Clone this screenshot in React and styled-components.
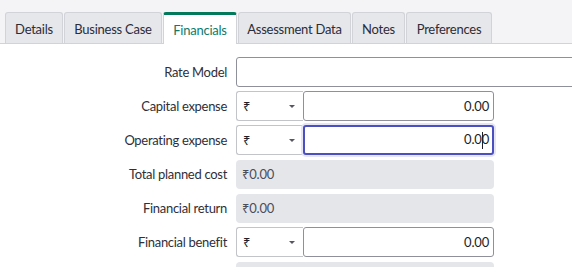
import React from "react";
import styled, { createGlobalStyle } from "styled-components";

const Global = createGlobalStyle`
  html, body { margin: 0; padding: 0; background: #ffffff; }
  body { font-family: Lato, "Noto Sans", "DejaVu Sans", sans-serif; font-size: 13px; color: #2e2f3a; }
  * { box-sizing: border-box; }
`;

const Page = styled.div`
  width: 572px;
  height: 267px;
  overflow: hidden;
  background: #ffffff;
`;

const TabBar = styled.div`
  display: flex;
  align-items: flex-end;
  gap: 1px;
  height: 44px;
  padding: 12px 0 0 5px;
  background: #f4f4f6;
  border-bottom: 1px solid #d2d3d8;
`;

const Tab = styled.div`
  width: ${(p) => p.$w}px;
  height: ${(p) => (p.$active ? "32px" : "31px")};
  margin-bottom: ${(p) => (p.$active ? "-1px" : "0")};
  display: flex;
  align-items: center;
  justify-content: center;
  font-size: 13px;
  letter-spacing: -0.25px;
  border: 1px solid #d2d3d8;
  border-bottom: none;
  border-top: ${(p) => (p.$active ? "3px solid #007a5a" : "1px solid #d2d3d8")};
  border-radius: 3px 3px 0 0;
  background: ${(p) => (p.$active ? "#ffffff" : "#e6e7eb")};
  color: ${(p) => (p.$active ? "#0f7a6a" : "#2b2c38")};
  padding-top: ${(p) => (p.$active ? "0" : "1px")};
`;

const Form = styled.div`
  display: flex;
  flex-direction: column;
  gap: 4px;
  padding-top: 13px;
`;

const Row = styled.div`
  display: grid;
  grid-template-columns: 227px 1fr;
  column-gap: 9px;
  align-items: center;
  height: 30px;
`;

const Label = styled.div`
  text-align: right;
  font-size: 13px;
  letter-spacing: -0.3px;
  color: #2e2f3a;
`;

const WideInput = styled.div`
  height: 30px;
  width: 345px;
  border: 1px solid #8f919a;
  border-radius: 3px;
  background: #fff;
`;

const Combo = styled.div`
  display: flex;
  width: 258px;
  height: 30px;
`;

const Select = styled.div`
  width: 67px;
  height: 30px;
  display: flex;
  align-items: center;
  justify-content: space-between;
  padding: 0 8px 0 6px;
  border: 1px solid #c3c4ca;
  border-right: none;
  border-radius: 3px 0 0 3px;
  background: #fff;
  font-family: "Noto Sans", "DejaVu Sans", sans-serif;
  font-size: 13px;
  color: #1d1e28;
`;

const Caret = styled.span`
  width: 0;
  height: 0;
  border-left: 3px solid transparent;
  border-right: 3px solid transparent;
  border-top: 3px solid #55565f;
  margin-top: 1px;
`;

const Amount = styled.div`
  flex: 1;
  height: 30px;
  display: flex;
  align-items: center;
  justify-content: flex-end;
  padding: 0 ${(p) => (p.$focused ? "3px" : "4px")} 0 6px;
  border: ${(p) => (p.$focused ? "2px solid #4b4fc0" : "1px solid #8f919a")};
  border-radius: 3px;
  background: #fff;
  box-shadow: ${(p) => (p.$focused ? "0 0 0 2px #e4e5f7" : "none")};
  font-size: 13px;
  letter-spacing: -0.2px;
  color: #1d1e28;
`;

const TextCaret = styled.span`
  display: inline-block;
  width: 1px;
  height: 17px;
  background: #1d1e28;
  margin: 0 -1px 0 0;
  vertical-align: middle;
`;

const ReadOnly = styled.div`
  width: 258px;
  height: 29px;
  display: flex;
  align-items: center;
  padding: 0 6px;
  border-radius: 4px;
  background: #e5e6ea;
  color: #4b4d5a;
  font-size: 13px;
  letter-spacing: -0.2px;
`;

const Rupee = styled.span`
  font-family: "Noto Sans", "DejaVu Sans", sans-serif;
  font-size: 13px;
`;

const tabs = [
  { name: "Details", w: 58 },
  { name: "Business Case", w: 98 },
  { name: "Financials", w: 74, active: true },
  { name: "Assessment Data", w: 113 },
  { name: "Notes", w: 53 },
  { name: "Preferences", w: 86 },
];

function CurrencyField({ focused }) {
  return (
    <Combo>
      <Select>
        <span>₹</span>
        <Caret />
      </Select>
      <Amount $focused={focused}>
        {focused ? (
          <span>
            0.0<TextCaret />0
          </span>
        ) : (
          "0.00"
        )}
      </Amount>
    </Combo>
  );
}

export default function App() {
  return (
    <Page>
      <Global />
      <TabBar>
        {tabs.map((t) => (
          <Tab key={t.name} $active={t.active} $w={t.w}>
            {t.name}
          </Tab>
        ))}
      </TabBar>
      <Form>
        <Row>
          <Label>Rate Model</Label>
          <WideInput />
        </Row>
        <Row>
          <Label>Capital expense</Label>
          <CurrencyField />
        </Row>
        <Row>
          <Label>Operating expense</Label>
          <CurrencyField focused />
        </Row>
        <Row>
          <Label>Total planned cost</Label>
          <ReadOnly>
            <Rupee>₹</Rupee>0.00
          </ReadOnly>
        </Row>
        <Row>
          <Label>Financial return</Label>
          <ReadOnly>
            <Rupee>₹</Rupee>0.00
          </ReadOnly>
        </Row>
        <Row>
          <Label>Financial benefit</Label>
          <CurrencyField />
        </Row>
        <Row>
          <Label></Label>
          <ReadOnly />
        </Row>
      </Form>
    </Page>
  );
}
